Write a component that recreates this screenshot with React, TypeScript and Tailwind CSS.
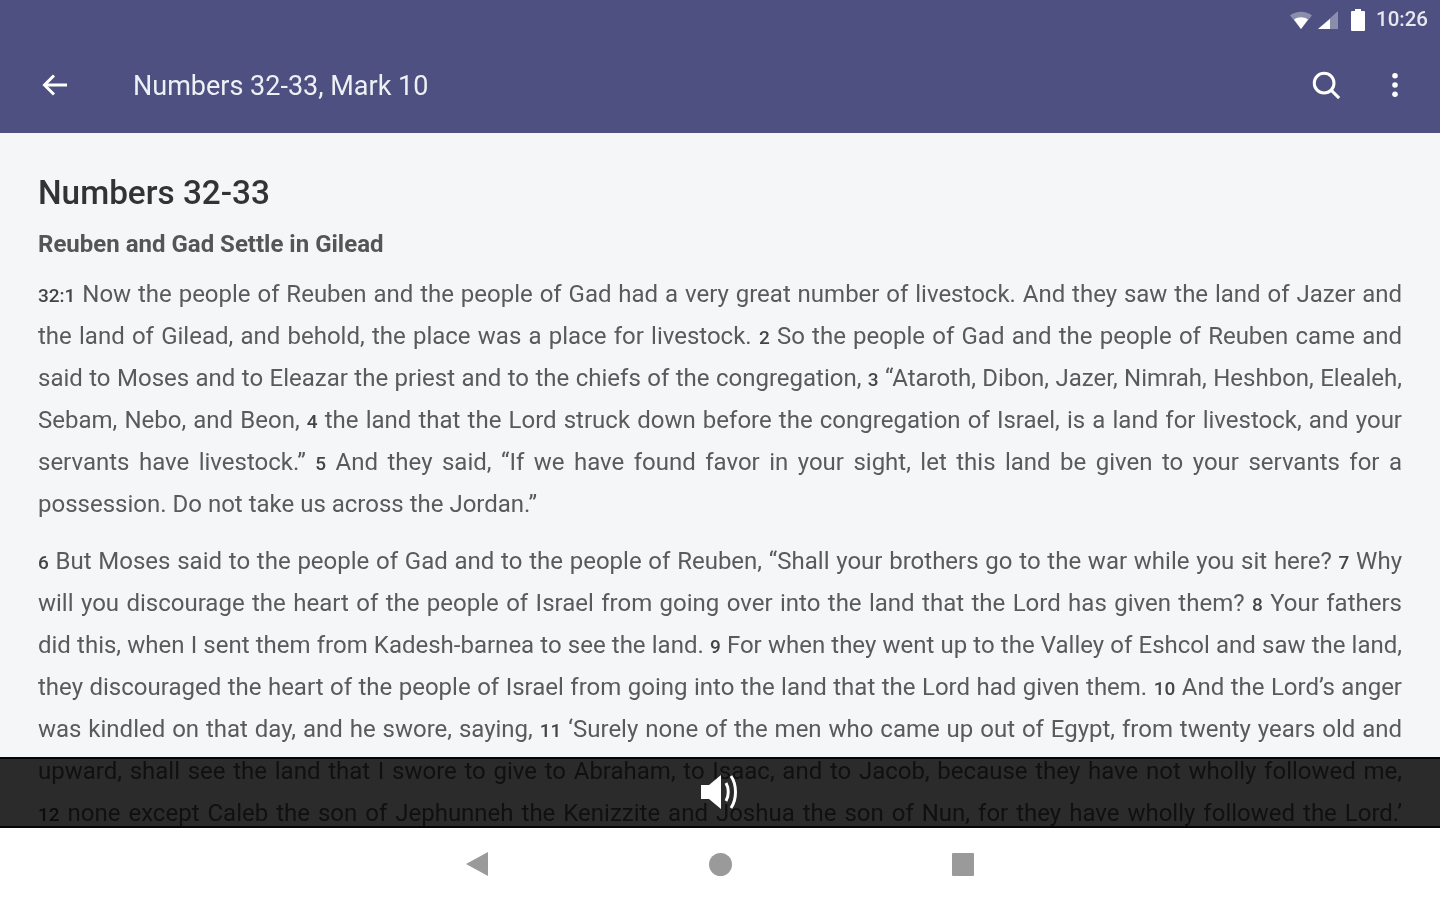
import React from 'react';

// one rendered line of the reading view; the breaks are fixed to match the device
const Line: React.FC<{ last?: boolean; children: React.ReactNode }> = ({ last, children }) => (
  <div className={last ? 'h-[42px] whitespace-nowrap' : 'h-[42px] whitespace-nowrap text-justify [text-align-last:justify]'}>
    {children}
  </div>
);

const V: React.FC<{ children: React.ReactNode }> = ({ children }) => (
  <span className="text-[19px] font-medium text-[#444]">{children}</span>
);

const App: React.FC = () => {
  return (
    <div className="h-[900px] w-[1440px] flex flex-col overflow-hidden bg-white font-['Roboto',sans-serif]">
      {/* App bar + status bar */}
      <header className="h-[133px] shrink-0 bg-[#4d5080] text-white">
        <div className="h-full flex flex-col blur-[0.7px]">
          <div className="h-[38px] flex items-center justify-end pr-[12px] pt-[1px]">
            <svg width="24" height="20" viewBox="0 0 24 20" className="mr-[4px]">
              <path d="M1 5.500C7 .5 17 .5 23 5.500L12 19z" fill="#fff" fillOpacity="0.35" />
              <path d="M5 9.500C9 6.500 15 6.500 19 9.500L12 19z" fill="#fff" />
            </svg>
            <svg width="22" height="20" viewBox="0 0 22 20" className="mr-[11px]">
              <path d="M21 1V19H1z" fill="#fff" fillOpacity="0.35" />
              <path d="M13 9V19H1z" fill="#fff" />
            </svg>
            <svg width="16" height="24" viewBox="0 0 16 24" className="mr-[10px]">
              <path d="M5 1h6v2h3a1 1 0 0 1 1 1v18a1 1 0 0 1-1 1H2a1 1 0 0 1-1-1V4a1 1 0 0 1 1-1h3z" fill="#fff" />
            </svg>
            <span className="text-[20.500px] font-medium text-[#e6e7ef]">10:26</span>
          </div>
          <div className="flex-1 flex items-center pb-[2px]">
            <div className="w-[133px] pl-[40px] shrink-0">
              <svg width="30" height="30" viewBox="0 0 30 30" fill="none" stroke="#fff" strokeWidth="3">
                <path d="M27 15H5" />
                <path d="M14 5.500L4.500 15L14 24.500" />
              </svg>
            </div>
            <h1 className="flex-1 mt-[3px] text-[27px] font-normal text-[#eef0f5]">Numbers 32-33, Mark 10</h1>
            <svg width="30" height="30" viewBox="0 0 32 32" fill="none" stroke="#fff" strokeWidth="3.200" className="mr-[50px]">
              <circle cx="14" cy="14" r="10.500" />
              <path d="M21.500 21.500L30 30" />
            </svg>
            <svg width="8" height="26" viewBox="0 0 8 28" fill="#fff" className="mr-[41px]">
              <circle cx="4" cy="4" r="3" />
              <circle cx="4" cy="14" r="3" />
              <circle cx="4" cy="24" r="3" />
            </svg>
          </div>
        </div>
      </header>

      {/* Reading pane */}
      <main className="relative flex-1 min-h-0 overflow-hidden bg-[#f5f6f8] text-[#5a5a5a] text-[24px]">
        <div className="px-[38px] pt-[41px] blur-[0.7px]">
          <h2 className="text-[33.300px] leading-[38px] font-medium text-[#333]">Numbers 32-33</h2>
          <h3 className="mt-[18px] text-[24px] leading-[28px] font-bold text-[#555]">Reuben and Gad Settle in Gilead</h3>

          <div className="mt-[15px] leading-[42px]">
            <Line><V>32:1</V> Now the people of Reuben and the people of Gad had a very great number of livestock. And they saw the land of Jazer and</Line>
            <Line>the land of Gilead, and behold, the place was a place for livestock. <V>2</V> So the people of Gad and the people of Reuben came and</Line>
            <Line>said to Moses and to Eleazar the priest and to the chiefs of the congregation, <V>3</V> “Ataroth, Dibon, Jazer, Nimrah, Heshbon, Elealeh,</Line>
            <Line>Sebam, Nebo, and Beon, <V>4</V> the land that the Lord struck down before the congregation of Israel, is a land for livestock, and your</Line>
            <Line>servants have livestock.” <V>5</V> And they said, “If we have found favor in your sight, let this land be given to your servants for a</Line>
            <Line last>possession. Do not take us across the Jordan.”</Line>
          </div>

          <div className="mt-[15px] leading-[42px]">
            <Line><V>6</V> But Moses said to the people of Gad and to the people of Reuben, “Shall your brothers go to the war while you sit here? <V>7</V> Why</Line>
            <Line>will you discourage the heart of the people of Israel from going over into the land that the Lord has given them? <V>8</V> Your fathers</Line>
            <Line>did this, when I sent them from Kadesh-barnea to see the land. <V>9</V> For when they went up to the Valley of Eshcol and saw the land,</Line>
            <Line>they discouraged the heart of the people of Israel from going into the land that the Lord had given them. <V>10</V> And the Lord’s anger</Line>
            <Line>was kindled on that day, and he swore, saying, <V>11</V> ‘Surely none of the men who came up out of Egypt, from twenty years old and</Line>
            <Line>upward, shall see the land that I swore to give to Abraham, to Isaac, and to Jacob, because they have not wholly followed me,</Line>
            <Line><V>12</V> none except Caleb the son of Jephunneh the Kenizzite and Joshua the son of Nun, for they have wholly followed the Lord.’</Line>
          </div>
        </div>

        {/* Volume toast over the text; the tint multiplies so the words stay darker than it */}
        <div className="absolute left-0 right-0 bottom-0 h-[71px] flex items-center justify-center">
          <div className="absolute inset-0 bg-[#2c2c2c] mix-blend-multiply border-y-2 border-[#050505]" />
          <svg width="42" height="38" viewBox="0 0 42 38" className="relative -mt-[1px] blur-[0.5px]">
            <path d="M2 12H10L22 2V36L10 26H2z" fill="#fff" />
            <path d="M27 10C30 15 30 23 27 28" fill="none" stroke="#fff" strokeWidth="3" />
            <path d="M32 3C38 12 38 26 32 35" fill="none" stroke="#fff" strokeWidth="3" />
          </svg>
        </div>
      </main>

      {/* Android nav bar */}
      <nav className="h-[72px] shrink-0 bg-white flex items-center justify-center gap-[220px] pr-[2px]">
        <svg width="24" height="26" viewBox="0 0 24 26" fill="#9a9a9a" className="blur-[0.5px]"><path d="M23 1V25L1 13z" /></svg>
        <div className="w-[23px] h-[23px] rounded-full bg-[#9a9a9a] blur-[0.5px]" />
        <div className="w-[22px] h-[23px] rounded-[1px] bg-[#9a9a9a] blur-[0.5px]" />
      </nav>
    </div>
  );
};

export default App;
